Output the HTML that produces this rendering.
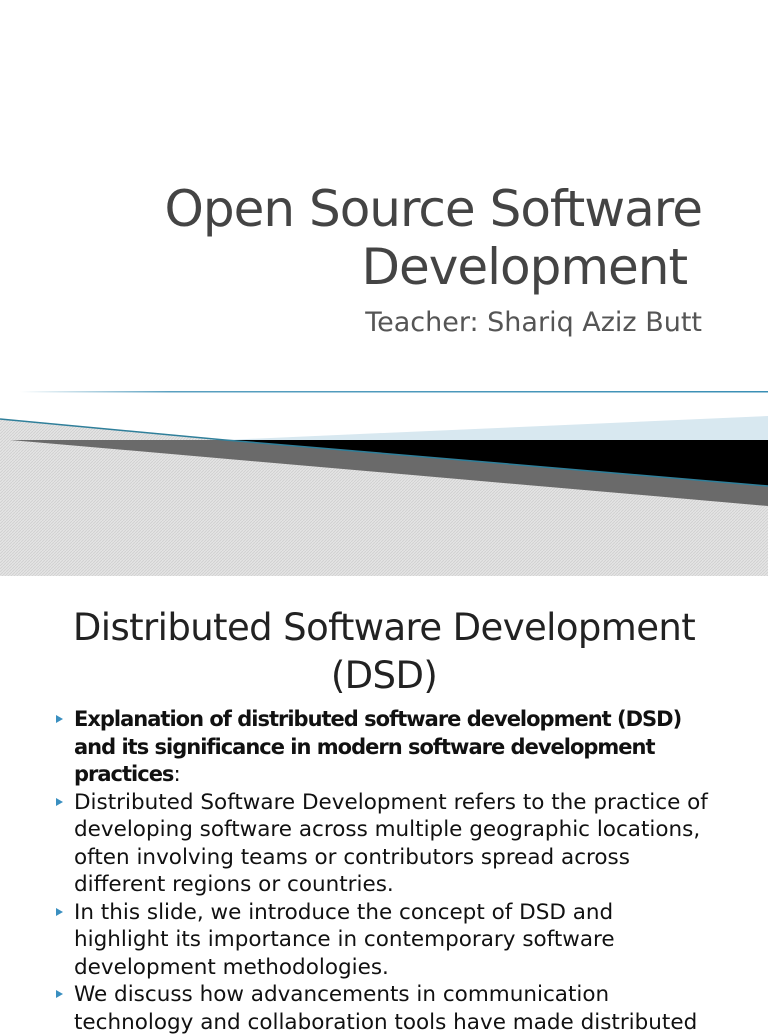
<!DOCTYPE html>
<html><head><meta charset="utf-8"><style>
body{margin:0;width:768px;height:1024px;overflow:hidden;background:#fff;font-family:"DejaVu Sans","Liberation Sans",sans-serif;position:relative}
.t1{position:absolute;right:66px;top:180px;font-size:50px;color:#444;text-align:right;line-height:58px;letter-spacing:-1px;white-space:nowrap}
.sub{position:absolute;right:66px;top:307px;font-size:27px;color:#555;white-space:nowrap}
.h2{position:absolute;left:0;width:768px;top:604px;text-align:center;font-size:37px;color:#222;line-height:48px;letter-spacing:-0.6px}
ul{position:absolute;left:52px;top:706px;width:710px;margin:0;padding:0;list-style:none;font-size:21.5px;line-height:27.5px;color:#111;white-space:nowrap}
li{position:relative;padding-left:22px}
li:before{content:"";position:absolute;left:4px;top:9px;border-left:7px solid #3a8fc0;border-top:4px solid transparent;border-bottom:4px solid transparent}
b{font-weight:bold;letter-spacing:-1px;font-size:21px}
</style></head><body>
<div class="t1">Open Source Software<br>Development&nbsp;</div>
<div class="sub">Teacher: Shariq Aziz Butt</div>
<svg style="position:absolute;left:0;top:380px" width="768" height="196">
<defs><pattern id="h" width="3" height="3" patternUnits="userSpaceOnUse"><rect width="3" height="3" fill="#e4e4e4"/><path d="M0 3L3 0" stroke="#cfcfcf" stroke-width="0.8"/></pattern>
<linearGradient id="lg" x1="0" x2="1"><stop offset="0" stop-color="#fff"/><stop offset="0.2" stop-color="#5aa0c0"/><stop offset="1" stop-color="#3a8fb5"/></linearGradient></defs>
<rect x="20" y="11" width="748" height="1.5" fill="url(#lg)"/>
<polygon points="0,39 225,60 768,106 768,196 0,196" fill="url(#h)"/>
<polygon points="225,60 768,36 768,60" fill="#d8e8f0"/>
<polygon points="10,60 768,60 768,126" fill="#6a6a6a"/>
<polygon points="225,60 768,60 768,106" fill="#000"/>
<polyline points="0,39 225,60 768,106" fill="none" stroke="#2f7f9a" stroke-width="1.5"/>
</svg>
<div class="h2">Distributed Software Development<br>(DSD)</div>
<ul>
<li><b>Explanation of distributed software development (DSD)<br>and its significance in modern software development<br>practices</b>:</li>
<li>Distributed Software Development refers to the practice of<br>developing software across multiple geographic locations,<br>often involving teams or contributors spread across<br>different regions or countries.</li>
<li>In this slide, we introduce the concept of DSD and<br>highlight its importance in contemporary software<br>development methodologies.</li>
<li>We discuss how advancements in communication<br>technology and collaboration tools have made distributed</li>
</ul>
</body></html>
